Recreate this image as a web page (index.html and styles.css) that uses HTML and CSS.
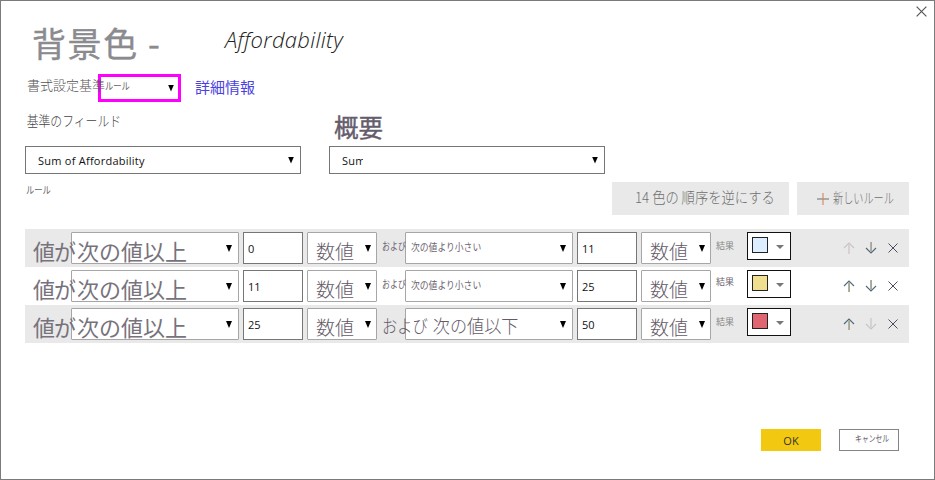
FILE: index.html
```html
<!DOCTYPE html>
<html lang="ja">
<head>
<meta charset="utf-8">
<title>背景色 - Affordability</title>
<link rel="stylesheet" href="styles.css">
</head>
<body>
<svg class="defs" width="0" height="0">
  <symbol id="up" viewBox="0 0 12 12"><path d="M1 6L6 1L11 6"/><path class="sl" d="M5.5 12V2"/><path class="sr" d="M6.5 12V2"/></symbol>
  <symbol id="down" viewBox="0 0 12 12"><path d="M1 6L6 11L11 6"/><path class="sl" d="M5.5 0V10"/><path class="sr" d="M6.5 0V10"/></symbol>
  <symbol id="cross" viewBox="0 0 12 12"><path d="M1.5 1.5L10.5 10.5M10.5 1.5L1.5 10.5"/></symbol>
</svg>
<main class="dialog">
  <svg class="close"><use href="#cross"/></svg>
  <header class="head">
    <h1 class="title">背景色 -</h1>
    <span class="subject">Affordability</span>
  </header>
  <div class="format">
    <span class="format-label">書式設定基準</span>
    <div class="format-select"><span class="mini">ルール</span><i class="tri"></i></div>
    <a class="link">詳細情報</a>
  </div>
  <div class="fields">
    <div class="field"><label class="field-label">基準のフィールド</label><div class="combo"><span>Sum of Affordability</span><i class="tri"></i></div></div>
    <div class="field"><label class="field-label strong">概要</label><div class="combo"><span class="clip">Sum</span><i class="tri"></i></div></div>
  </div>
  <div class="tools">
    <span class="mini rules-label">ルール</span>
    <button class="tool reverse"><span class="t">14 色の 順序を逆にする</span></button>
    <button class="tool add"><svg class="plus" viewBox="0 0 12 12"><path class="h" d="M0 6H12"/><path class="v" d="M6 0V12"/></svg><span class="t">新しいルール</span></button>
  </div>
  <section class="rules">
    <div class="rule shade">
      <span class="if">値が</span><div class="sel op"><span class="big">次の値以上</span><i class="tri"></i></div>
      <div class="num">0</div><div class="sel unit"><span class="val">数値</span><i class="tri"></i></div>
      <span class="and"><span class="small-and">および</span></span><div class="sel op"><span class="small">次の値より小さい</span><i class="tri"></i></div>
      <div class="num">11</div><div class="sel unit"><span class="val">数値</span><i class="tri"></i></div>
      <span class="result">結果</span><div class="color"><i class="chip blue"></i><i class="caret"></i></div>
      <div class="acts"><svg class="off"><use href="#up"/></svg><svg class="on"><use href="#down"/></svg><svg class="x"><use href="#cross"/></svg></div>
    </div>
    <div class="rule">
      <span class="if">値が</span><div class="sel op"><span class="big">次の値以上</span><i class="tri"></i></div>
      <div class="num">11</div><div class="sel unit"><span class="val">数値</span><i class="tri"></i></div>
      <span class="and"><span class="small-and">および</span></span><div class="sel op"><span class="small">次の値より小さい</span><i class="tri"></i></div>
      <div class="num">25</div><div class="sel unit"><span class="val">数値</span><i class="tri"></i></div>
      <span class="result mid">結果</span><div class="color"><i class="chip yellow"></i><i class="caret"></i></div>
      <div class="acts"><svg class="on"><use href="#up"/></svg><svg class="on"><use href="#down"/></svg><svg class="x"><use href="#cross"/></svg></div>
    </div>
    <div class="rule shade">
      <span class="if">値が</span><div class="sel op"><span class="big">次の値以上</span><i class="tri"></i></div>
      <div class="num">25</div><div class="sel unit"><span class="val">数値</span><i class="tri"></i></div>
      <span class="and"><span class="large-and">および</span></span><div class="sel op"><span class="large">次の値以下</span><i class="tri"></i></div>
      <div class="num">50</div><div class="sel unit"><span class="val">数値</span><i class="tri"></i></div>
      <span class="result">結果</span><div class="color"><i class="chip red"></i><i class="caret"></i></div>
      <div class="acts"><svg class="on"><use href="#up"/></svg><svg class="off"><use href="#down"/></svg><svg class="x"><use href="#cross"/></svg></div>
    </div>
  </section>
  <footer class="foot"><button class="ok">OK</button><button class="cancel"><span class="t">キャンセル</span></button></footer>
</main>
</body>
</html>
```
FILE: styles.css
```css
* { box-sizing: border-box; }
body { margin: 0; background: #fff; font-family: "Open Sans", "Noto Sans CJK JP", sans-serif; font-size: 11px; color: #111; }
button { font: inherit; border: 0; padding: 0; border-radius: 0; }
svg { fill: none; stroke-width: 1.1; flex: none; }
.defs { position: absolute; }
.dialog { position: relative; width: 935px; height: 480px; border: 1px solid #7b7b7b; padding: 19px 25px 0 24px; overflow: hidden; }
.close { position: absolute; left: 914px; top: 4px; width: 13px; height: 13px; stroke: #555; }
.t, .mini, .small, .small-and, .large, .large-and, .big, .val, .if, .result, .title, .subject, .format-label, .link, .field-label { display: block; white-space: nowrap; transform-origin: 0 50%; }

.head { display: flex; height: 50px; }
.title { margin: 0; padding-left: 7px; width: 200px; font: 400 34px/46px "Noto Sans CJK JP", sans-serif; letter-spacing: 1.6px; color: #8b8b8f; -webkit-text-stroke: .4px #8b8b8f; }
.subject { font: italic 300 22px/39px "Open Sans", sans-serif; letter-spacing: .3px; color: #222; }

.format { display: flex; height: 36px; align-items: flex-start; padding-top: 4px; }
.format-label { position: relative; z-index: 1; width: 73px; padding-left: 2px; font: 300 13px/21px "Noto Sans CJK JP", sans-serif; color: #555; }
.format-select { display: flex; align-items: center; justify-content: space-between; width: 83px; height: 28px; border: 3px solid #f0f; padding: 0 4px 0 4px; }
.mini { width: 26px; font: 400 10px/16px "Noto Sans CJK JP", sans-serif; color: #666; transform: scaleX(.83); }
.format-select .mini { margin-top: -4px; }
.link { margin-left: 14px; font: 400 15px/26px "Noto Sans CJK JP", sans-serif; color: #4a42e0; }
.tri { flex: none; width: 6px; height: 7px; background: #000; clip-path: polygon(0 0, 100% 0, 50% 100%); }

.fields { display: flex; gap: 28px; height: 68px; }
.field { width: 276px; }
.field-label { height: 40px; padding-left: 2px; font: 300 14px/28px "Noto Sans CJK JP", sans-serif; color: #444; transform: scaleX(.845); }
.field-label.strong { padding-left: 5px; font: 400 24.5px/42px "Noto Sans CJK JP", sans-serif; color: #655c6c; -webkit-text-stroke: .4px #655c6c; transform: none; }
.combo { display: flex; align-items: center; justify-content: space-between; height: 28px; border: 1px solid #767676; padding: 0 6px 0 12px; letter-spacing: .25px; }
.clip { width: 21px; overflow: hidden; }

.tools { display: flex; height: 55px; padding-top: 8px; }
.rules-label { margin: 0 560px 0 1px; line-height: 15px; }
.tool { display: flex; align-items: center; height: 33px; background: #e9e9e9; color: #6f6f6f; font: 300 14px/20px "Noto Sans CJK JP", sans-serif; }
.reverse { width: 177px; padding-left: 23px; margin-right: 8px; font-size: 15px; }
.reverse .t { margin-top: -3px; transform: scaleX(.885); }
.add { width: 112px; padding-left: 20px; }
.plus { width: 12px; height: 12px; margin-right: 4px; }
.plus .h { stroke: #777; }
.plus .v { stroke: #d8845c; }
.add .t { margin-top: -3px; transform: scaleX(.725); }

.rule { display: flex; height: 38px; padding-top: 3px; }
.shade { background: #e9e9e9; }
.if, .big { font: 400 22px/35px "Noto Sans CJK JP", sans-serif; color: #77727c; }
.if { position: relative; z-index: 1; width: 46px; padding-left: 8px; letter-spacing: -1px; line-height: 36px; }
.sel { display: flex; justify-content: space-between; height: 32px; border: 1px solid #a6a6a6; border-radius: 1px; background: #fff; padding: 0 5px; margin-right: 4px; }
.sel .tri { margin-top: 12px; }
.op { width: 168px; padding: 0 6px 0 5px; }
.unit { width: 70px; padding-left: 8px; }
.num { width: 60px; height: 32px; margin-right: 4px; padding-left: 4px; border: 1px solid #767676; background: #fff; line-height: 31px; }
.val { font: 300 19px/36px "Noto Sans CJK JP", sans-serif; color: #625a66; }
.and { position: relative; z-index: 1; width: 24px; padding-left: 1px; }
.small, .small-and { font: 400 10px/28px "Noto Sans CJK JP", sans-serif; color: #6d6571; }
.small { transform: scaleX(.88); }
.small-and { width: 30px; transform: scaleX(.8); }
.large, .large-and { font: 300 18px/33px "Noto Sans CJK JP", sans-serif; color: #625a66; }
.large { padding-left: 23px; transform: scaleX(.95); }
.large-and { width: 54px; line-height: 34px; transform: scaleX(.85); }
.result { width: 32px; padding-left: 1px; font: 400 9px/28px "Noto Sans CJK JP", sans-serif; color: #888; }
.mid { line-height: 24px; color: #6d6571; }
.color { display: flex; width: 44px; height: 28px; border: 1px solid #111; background: #fff; padding: 4px; }
.chip { width: 16px; height: 16px; border: 1px solid #222; }
.blue { background: #dceeff; }
.yellow { background: #f0df91; }
.red { background: #df6670; }
.caret { width: 8px; height: 4px; margin: 8px 0 0 8px; background: #777; clip-path: polygon(0 0, 100% 0, 50% 100%); }
.acts { display: flex; gap: 10px; margin: 10px 0 0 52px; }
.acts svg { width: 12px; height: 12px; }
.sl { stroke: var(--left); stroke-width: 1; }
.sr { stroke: var(--right); stroke-width: 1; }
.off { stroke: #c9c4c4; --left: #dccfca; --right: #d3d3da; }
.on { stroke: #4d6878; --left: #e5a45c; --right: #76b4e0; }
.acts .x { stroke: #544a5c; stroke-width: 1; }

.foot { display: flex; justify-content: flex-end; gap: 18px; margin-top: 86px; padding-right: 10px; }
.ok, .cancel { width: 60px; height: 22px; }
.ok { background: #f2c811; color: #333; }
.cancel { border: 1px solid #85828a; background: #fff; padding-left: 15px; font: 400 9px/16px "Noto Sans CJK JP", sans-serif; color: #655c6c; }
.cancel .t { margin-top: -3px; transform: scaleX(.76); }
```
